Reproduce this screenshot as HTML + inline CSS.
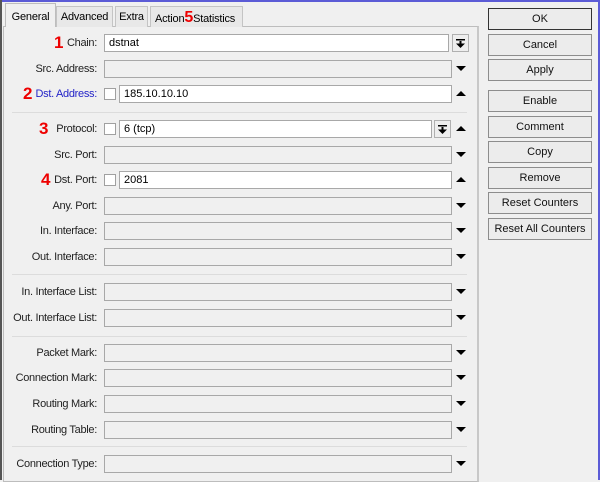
<!DOCTYPE html>
<html><head><meta charset="utf-8"><style>
*{margin:0;padding:0;box-sizing:border-box}
body{width:600px;height:480px;background:#f0f0f0;position:relative;overflow:hidden;font-family:"Liberation Sans",sans-serif;font-size:11px;color:#000}
.a{position:absolute}
.top{left:0;top:0;width:600px;height:2px;background:#5b5bd6}
.lb{left:0;top:0;width:2px;height:480px;background:#555}
.rb{left:598px;top:0;width:2px;height:480px;background:#5b5bd6}
.panel{left:3px;top:26px;width:476px;height:456px;border:1px solid #bdbdbd;border-right:2px solid #c8c8c8;background:#f0f0f0}
.tab{top:6px;height:21px;border:1px solid #c4c4c4;border-bottom:none;background:#e8e8e8;line-height:21px;text-align:center;font-size:11px;letter-spacing:-0.2px}
.tab.sel{background:#f0f0f0;top:3px;height:24px;line-height:26px;z-index:2;border-color:#bdbdbd}
.lbl{width:97px;left:0;text-align:right;line-height:18px;color:#222;font-size:11px;letter-spacing:-0.3px;white-space:nowrap}
.box{height:18px;border:1px solid #a8a8a8;background:#f0f0f0;line-height:17px;padding-left:4px}
.w{background:#fff}
.cb{width:12px;height:12px;border:1px solid #a0a0a0;background:#fff}
.sep{left:12px;width:455px;height:1px;background:#dcdcdc}
.dn{width:0;height:0;border-left:5px solid transparent;border-right:5px solid transparent;border-top:5px solid #000}
.up{width:0;height:0;border-left:5px solid transparent;border-right:5px solid transparent;border-bottom:5px solid #000}
.ddb{width:17px;height:18px;border:1px solid #b0b0b0;background:#eee}
.ddb svg{position:absolute;left:3px;top:4px}
.btn{left:488px;width:104px;height:22px;border:1px solid #8d8d8d;background:#ececec;text-align:center;line-height:20px;color:#111}
.num{color:#e00;font-weight:bold;font-size:17px;line-height:18px}
</style></head><body>
<div class="a top"></div><div class="a lb"></div><div class="a rb"></div>
<div class="a panel"></div>
<div class="a tab sel" style="left:5px;width:51px">General</div>
<div class="a tab" style="left:56px;width:57px">Advanced</div>
<div class="a tab" style="left:115px;width:33px">Extra</div>
<div class="a tab" style="left:150px;width:93px;text-align:left;padding-left:4px">Action<span style="color:#e00;font-weight:bold;font-size:16px">5</span>Statistics</div>

<div class="a num" style="left:54px;top:34px">1</div>
<div class="a lbl" style="top:34px">Chain:</div>
<div class="a box w" style="left:104px;top:34px;width:345px">dstnat</div>
<div class="a ddb" style="left:452px;top:34px"><svg width="9" height="9"><rect x="0" y="0" width="9" height="1.5"/><rect x="3.5" y="2" width="2" height="3"/><path d="M0 4.5h9l-4.5 4.5z"/></svg></div>

<div class="a lbl" style="top:60px">Src. Address:</div>
<div class="a box" style="left:104px;top:60px;width:348px"></div>
<div class="a dn" style="left:456px;top:66px"></div>

<div class="a num" style="left:23px;top:85px">2</div>
<div class="a lbl" style="top:85px;color:#2323c8">Dst. Address:</div>
<div class="a cb" style="left:104px;top:88px"></div>
<div class="a box w" style="left:119px;top:85px;width:333px">185.10.10.10</div>
<div class="a up" style="left:456px;top:91px"></div>

<div class="a sep" style="top:112px"></div>

<div class="a num" style="left:39px;top:120px">3</div>
<div class="a lbl" style="top:120px">Protocol:</div>
<div class="a cb" style="left:104px;top:123px"></div>
<div class="a box w" style="left:119px;top:120px;width:313px">6 (tcp)</div>
<div class="a ddb" style="left:434px;top:120px"><svg width="9" height="9"><rect x="0" y="0" width="9" height="1.5"/><rect x="3.5" y="2" width="2" height="3"/><path d="M0 4.5h9l-4.5 4.5z"/></svg></div>
<div class="a up" style="left:456px;top:126px"></div>

<div class="a lbl" style="top:146px">Src. Port:</div>
<div class="a box" style="left:104px;top:146px;width:348px"></div>
<div class="a dn" style="left:456px;top:152px"></div>

<div class="a num" style="left:41px;top:171px">4</div>
<div class="a lbl" style="top:171px">Dst. Port:</div>
<div class="a cb" style="left:104px;top:174px"></div>
<div class="a box w" style="left:119px;top:171px;width:333px">2081</div>
<div class="a up" style="left:456px;top:177px"></div>

<div class="a lbl" style="top:197px">Any. Port:</div>
<div class="a box" style="left:104px;top:197px;width:348px"></div>
<div class="a dn" style="left:456px;top:203px"></div>

<div class="a lbl" style="top:222px">In. Interface:</div>
<div class="a box" style="left:104px;top:222px;width:348px"></div>
<div class="a dn" style="left:456px;top:228px"></div>

<div class="a lbl" style="top:248px">Out. Interface:</div>
<div class="a box" style="left:104px;top:248px;width:348px"></div>
<div class="a dn" style="left:456px;top:254px"></div>

<div class="a sep" style="top:274px"></div>

<div class="a lbl" style="top:283px">In. Interface List:</div>
<div class="a box" style="left:104px;top:283px;width:348px"></div>
<div class="a dn" style="left:456px;top:289px"></div>

<div class="a lbl" style="top:309px">Out. Interface List:</div>
<div class="a box" style="left:104px;top:309px;width:348px"></div>
<div class="a dn" style="left:456px;top:315px"></div>

<div class="a sep" style="top:336px"></div>

<div class="a lbl" style="top:344px">Packet Mark:</div>
<div class="a box" style="left:104px;top:344px;width:348px"></div>
<div class="a dn" style="left:456px;top:350px"></div>

<div class="a lbl" style="top:369px">Connection Mark:</div>
<div class="a box" style="left:104px;top:369px;width:348px"></div>
<div class="a dn" style="left:456px;top:375px"></div>

<div class="a lbl" style="top:395px">Routing Mark:</div>
<div class="a box" style="left:104px;top:395px;width:348px"></div>
<div class="a dn" style="left:456px;top:401px"></div>

<div class="a lbl" style="top:421px">Routing Table:</div>
<div class="a box" style="left:104px;top:421px;width:348px"></div>
<div class="a dn" style="left:456px;top:427px"></div>

<div class="a sep" style="top:446px"></div>

<div class="a lbl" style="top:455px">Connection Type:</div>
<div class="a box" style="left:104px;top:455px;width:348px"></div>
<div class="a dn" style="left:456px;top:461px"></div>

<div class="a btn" style="top:8px;border-color:#333">OK</div>
<div class="a btn" style="top:34px">Cancel</div>
<div class="a btn" style="top:59px">Apply</div>
<div class="a btn" style="top:90px">Enable</div>
<div class="a btn" style="top:116px">Comment</div>
<div class="a btn" style="top:141px">Copy</div>
<div class="a btn" style="top:167px">Remove</div>
<div class="a btn" style="top:192px">Reset Counters</div>
<div class="a btn" style="top:218px">Reset All Counters</div>
</body></html>
